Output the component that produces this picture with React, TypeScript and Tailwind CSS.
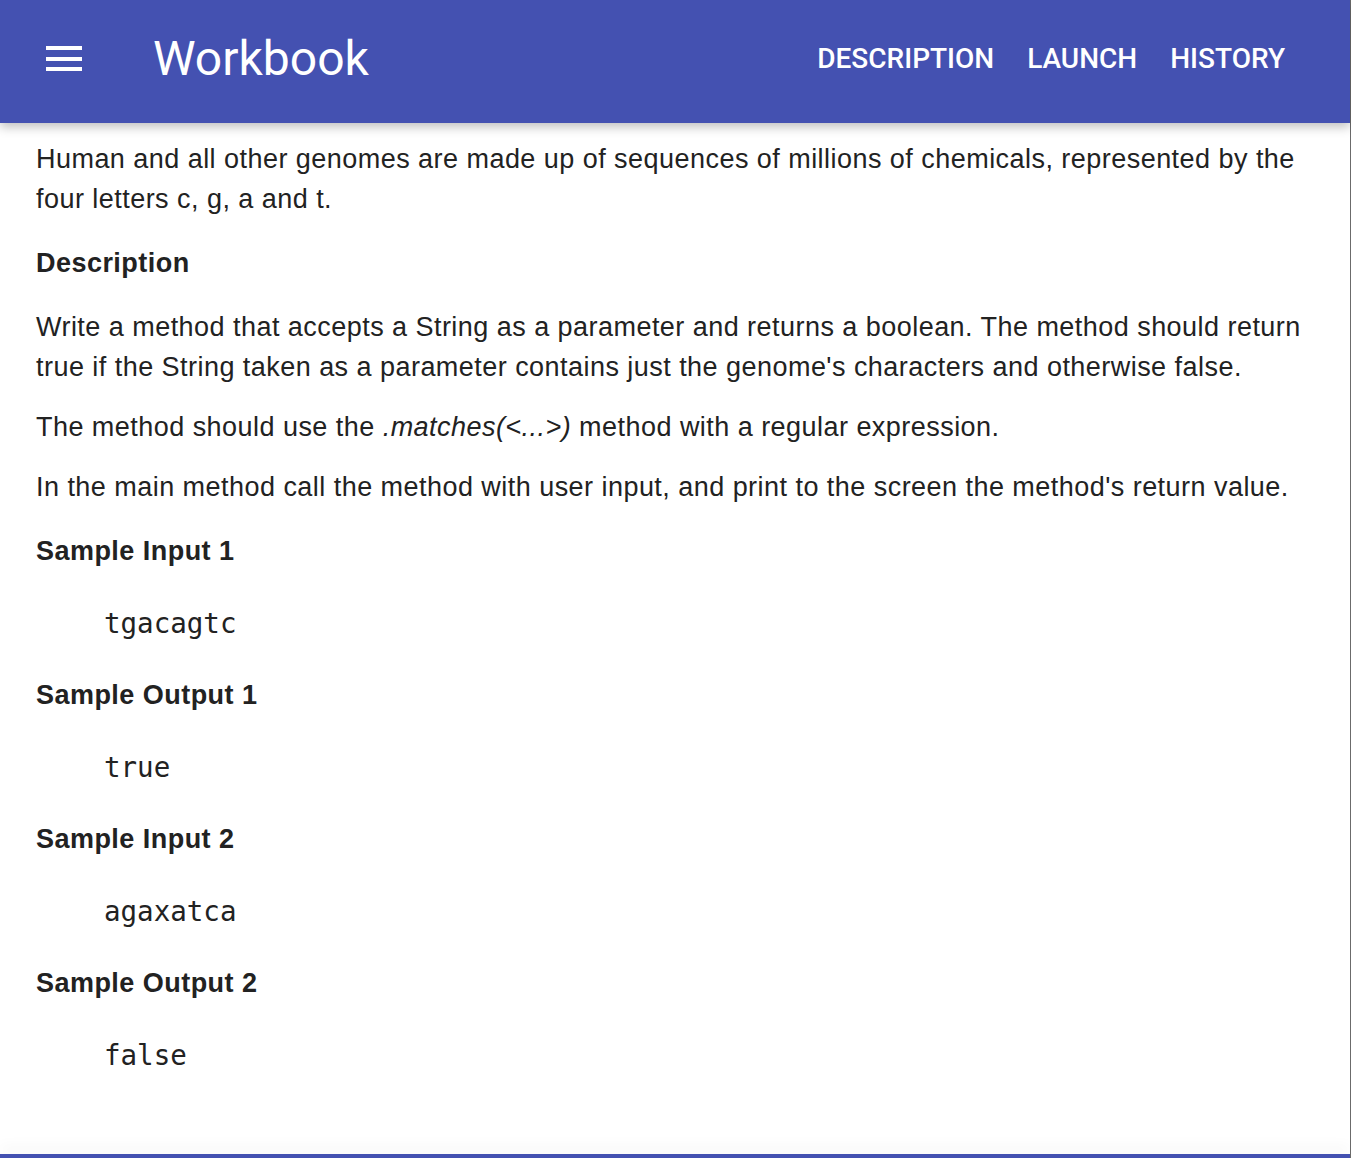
const samples = [
  { title: "Sample Input 1", code: "tgacagtc" },
  { title: "Sample Output 1", code: "true" },
  { title: "Sample Input 2", code: "agaxatca" },
  { title: "Sample Output 2", code: "false" },
];

export default function App() {
  return (
    <div className="flex min-h-[1158px] w-full flex-col border-r border-[#6b6b6b] bg-white">
      <header className="relative z-10 flex h-[123px] items-center bg-[#4451b1] pb-[6px] text-white shadow-[0_4px_10px_rgba(0,0,0,0.25)]">
        <div className="ml-[46px] flex h-[25px] w-[36px] flex-col justify-between">
          <span className="h-[4px] w-full bg-white" />
          <span className="h-[4px] w-full bg-white" />
          <span className="h-[4px] w-full bg-white" />
        </div>
        <h1 className="ml-[71px] font-['Roboto',sans-serif] text-[48px] font-normal leading-none">
          Workbook
        </h1>
        <nav className="ml-auto mr-[65px] flex gap-[33px] font-['Roboto',sans-serif] text-[28px] font-medium">
          <a>DESCRIPTION</a>
          <a>LAUNCH</a>
          <a>HISTORY</a>
        </nav>
      </header>

      <main className="flex-1 px-[36px] pt-[16px] font-['Liberation_Sans',Arial,sans-serif] text-[27px] leading-[40px] tracking-[0.46px] text-[#222]">
        <p>
          Human and all other genomes are made up of sequences of millions of chemicals, represented by the four
          letters c, g, a and t.
        </p>
        <h2 className="mt-[24px] font-bold">Description</h2>
        <p className="mt-[24px]">
          Write a method that accepts a String as a parameter and returns a boolean. The method should return true
          if the String taken as a parameter contains just the genome's characters and otherwise false.
        </p>
        <p className="mt-[20px]">
          The method should use the <em>.matches(&lt;...&gt;)</em> method with a regular expression.
        </p>
        <p className="mt-[20px]">
          In the main method call the method with user input, and print to the screen the method's return value.
        </p>
        {samples.map((s, i) => (
          <div key={s.title} className={i === 0 ? "mt-[24px]" : "mt-[32px]"}>
            <h3 className="font-bold">{s.title}</h3>
            <pre className="mt-[32px] pl-[68px] font-['DejaVu_Sans_Mono',monospace] text-[27.5px] leading-[40px] tracking-normal">
              {s.code}
            </pre>
          </div>
        ))}
      </main>

      <div className="relative h-[4px] bg-[#4451b1] shadow-[0_-6px_14px_rgba(0,0,0,0.08)]" />
    </div>
  );
}
